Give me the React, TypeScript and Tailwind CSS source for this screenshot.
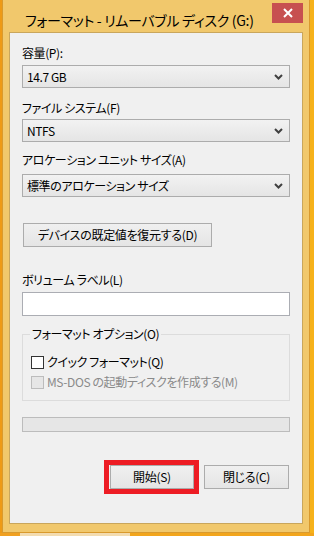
import { useState } from 'react'

const jp = "font-['Noto_Sans_CJK_JP','Noto_Sans',sans-serif] [font-feature-settings:'palt']"

// コンボボックス（Windows 8 風）
const Combo = ({ value, className = '' }: { value: string; className?: string }) => (
  <div
    className={`flex h-[23px] w-[268px] items-center justify-between border border-[#acacac] bg-gradient-to-b from-[#f2f2f2] to-[#e5e5e5] pl-[4px] pr-[4px] ${className}`}
  >
    <span className="text-[12px] leading-[16px] tracking-[-0.4px] text-black">{value}</span>
    <svg width="9" height="6" viewBox="0 0 9 6" className="mr-[2px]">
      <path d="M1 1 L4.5 4.5 L8 1" fill="none" stroke="#404040" strokeWidth="2" />
    </svg>
  </div>
)

const Label = ({ text, className = '' }: { text: string; className?: string }) => (
  <div className={`h-[16px] whitespace-nowrap text-[12px] leading-[16px] tracking-[-0.4px] text-black ${className}`}>
    {text}
  </div>
)

const WinButton = ({ text, className = '' }: { text: string; className?: string }) => (
  <button
    className={`flex h-[24px] items-center justify-center border border-[#acacac] bg-gradient-to-b from-[#f0f0f0] to-[#e5e5e5] text-[12px] leading-[16px] tracking-[-0.3px] text-black ${className}`}
  >
    {text}
  </button>
)

const App = () => {
  const [quick, setQuick] = useState(false)

  return (
    <div className={`h-[536px] w-[314px] overflow-hidden bg-gradient-to-r from-[#ee9a16] via-[#f2a61e] to-[#f6b21a] ${jp}`}>
      {/* ウィンドウ */}
      <div className="ml-[2px] flex h-[533px] w-[308px] flex-col border-x border-b border-[#d99a2e] bg-[#f1c86c]">
        {/* タイトルバー */}
        <div className="flex h-[32px] items-start">
          <div className="whitespace-nowrap pl-[22px] pt-[10px] text-[14px] leading-[20px] tracking-[-0.3px] text-black">
            フォーマット - リムーバブル ディスク (G:)
          </div>
          <div className="ml-auto mr-[6px] mt-[3px] flex h-[20px] w-[31px] shrink-0 items-center justify-center bg-[#c75050]">
            <svg width="10" height="10" viewBox="0 0 10 10">
              <path d="M1 1 L9 9 M9 1 L1 9" stroke="#fff" strokeWidth="2" />
            </svg>
          </div>
        </div>

        {/* 本体 */}
        <div className="mx-[6px] flex h-[492px] flex-col border border-[#c9a65c] bg-[#f0f0f0] px-[12px]">
          <Label text="容量(P):" className="mt-[12px]" />
          <Combo value="14.7 GB" className="mt-[4px]" />

          <Label text="ファイル システム(F)" className="mt-[12px]" />
          <Combo value="NTFS" className="mt-[3px]" />

          <Label text="アロケーション ユニット サイズ(A)" className="mt-[10px]" />
          <Combo value="標準のアロケーション サイズ" className="mt-[6px]" />

          <WinButton text="デバイスの既定値を復元する(D)" className="ml-[1px] mt-[26px] w-[189px]" />

          <Label text="ボリューム ラベル(L)" className="mt-[25px]" />
          <div className="mt-[4px] h-[24px] w-[268px] border border-[#abadb3] bg-white" />

          {/* フォーマット オプション */}
          <div className="relative mt-[18px] h-[67px] w-[268px] border border-[#dcdcdc] pl-[8px] pt-[19px]">
            <div className="absolute -top-[9px] left-[7px] bg-[#f0f0f0] px-[2px] text-[12px] leading-[16px] tracking-[-0.4px] text-black">
              フォーマット オプション(O)
            </div>
            <label className="flex h-[16px] items-center" onClick={() => setQuick(!quick)}>
              <span className="flex h-[13px] w-[13px] items-center justify-center border border-[#333] bg-white">
                {quick && (
                  <svg width="9" height="9" viewBox="0 0 9 9">
                    <path d="M1 4.5 L3.5 7 L8 1.5" fill="none" stroke="#222" strokeWidth="1.6" />
                  </svg>
                )}
              </span>
              <span className="ml-[3px] text-[12px] leading-[16px] tracking-[-0.4px] text-black">クイック フォーマット(Q)</span>
            </label>
            <div className="mt-[4px] flex h-[16px] items-center">
              <span className="h-[13px] w-[13px] border border-[#bcbcbc] bg-[#e6e6e6]" />
              <span className="ml-[3px] text-[12px] leading-[16px] tracking-[-0.4px] text-[#8a8a8a]">
                MS-DOS の起動ディスクを作成する(M)
              </span>
            </div>
          </div>

          {/* 進行状況バー */}
          <div className="mt-[16px] h-[15px] w-[268px] border border-[#bcbcbc] bg-[#e6e6e6]" />

          {/* ボタン */}
          <div className="mt-[33px] flex w-[268px] justify-end gap-[10px] pr-[1px]">
            <div className="relative">
              <WinButton text="開始(S)" className="w-[84px] border-[#3c8ee0]" />
              <div className="pointer-events-none absolute -bottom-[5px] -left-[6px] -right-[5px] -top-[5px] border-[5px] border-[#ed1c24]" />
            </div>
            <WinButton text="閉じる(C)" className="w-[85px]" />
          </div>
        </div>
      </div>
      <div className="flex h-[3px]">
        <div className="w-[20px] bg-[#f0a020]" />
        <div className="w-[110px] bg-[#f3dcb0]" />
        <div className="flex-1 bg-[#f2a51c]" />
      </div>
    </div>
  )
}

export default App
